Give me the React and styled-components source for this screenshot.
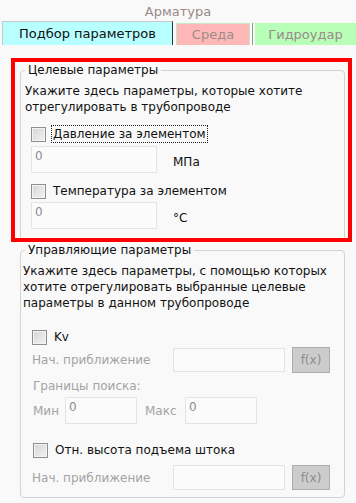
import React from "react";
import styled, { createGlobalStyle } from "styled-components";

const Global = createGlobalStyle`
  body {
    margin: 0;
    background: #f9f9f9;
    font-family: "DejaVu Sans", "Liberation Sans", sans-serif;
    font-size: 12px;
    color: #111;
  }
`;

const Page = styled.div`
  width: 356px;
  height: 503px;
  overflow: hidden;
`;

const Title = styled.div`
  height: 21px;
  padding-top: 3px;
  box-sizing: border-box;
  text-align: center;
  font-size: 13px;
  line-height: 18px;
  color: #9c8a8a;
`;

const TabBar = styled.div`
  display: flex;
  align-items: flex-end;
  height: 24px;
  padding-left: 2px;
`;

const Tab = styled.div`
  height: ${(p) => (p.$active ? "24px" : "22px")};
  box-sizing: border-box;
  display: flex;
  align-items: center;
  justify-content: center;
  font-size: 13px;
  background: ${(p) => p.$bg};
  color: ${(p) => (p.$active ? "#111" : "#9c8a8a")};
  width: ${(p) => p.$w};
  flex: ${(p) => (p.$grow ? 1 : "none")};
  margin-left: ${(p) => p.$ml || "0"};
  border: 1px solid ${(p) => p.$border || "transparent"};
  border-right-color: ${(p) => (p.$active ? "#333" : p.$border || "transparent")};
  border-bottom: none;
`;

const TabSep = styled.div`
  width: 1px;
  height: 22px;
  margin: 0 2px 0 2px;
  background: #9a9a9a;
`;

const Highlight = styled.div`
  margin: 13px 4px 0 11px;
  height: 184px;
  box-sizing: border-box;
  border: 4px solid #ff0000;
  padding: 0 3px 0 5px;
  overflow: hidden;
`;

const Group = styled.fieldset`
  margin: 0 ${(p) => p.$mr || "0"} 0 ${(p) => p.$ml || "0"};
  padding: 0;
  border: 1px solid #d3d3d3;
  border-radius: 4px;
  min-width: 0;
  height: ${(p) => p.$h};
  box-sizing: border-box;
`;

const Legend = styled.legend`
  margin-left: 4px;
  padding: 0 3px 0 3px;
  line-height: 16px;
  font-size: 12px;
  color: #111;
`;

const Body = styled.div`
  display: flex;
  flex-direction: column;
  padding: ${(p) => p.$pad};
`;

const Desc = styled.div`
  line-height: 16px;
  color: #111;
`;

const CheckRow = styled.label`
  display: flex;
  align-items: center;
  gap: 6px;
  height: 18px;
  margin: ${(p) => p.$m};
`;

const Box = styled.span`
  width: 15px;
  height: 15px;
  box-sizing: border-box;
  border: 1px solid #8e8e8e;
  background: linear-gradient(135deg, #d6d6d6, #f2f2f2);
  box-shadow: inset 0 0 0 1px #f4f4f4;
  flex: none;
`;

const CheckText = styled.span`
  padding: 1px 1px;
  line-height: 14px;
  border: 1px ${(p) => (p.$focus ? "dotted #222" : "solid transparent")};
  margin-left: -1px;
`;

const InputRow = styled.div`
  display: flex;
  align-items: center;
  margin: ${(p) => p.$m};
`;

const Field = styled.div`
  width: ${(p) => p.$w};
  height: ${(p) => p.$h};
  box-sizing: border-box;
  border: 1px solid #e4e4e4;
  background: #fbfbfb;
  color: #8c8c96;
  padding: 2px 0 0 3px;
  line-height: 14px;
  flex: none;
`;

const Unit = styled.span`
  margin: 4px 0 0 16px;
  color: #111;
`;

const Muted = styled.span`
  color: #a3a3a3;
  width: ${(p) => p.$w || "auto"};
  margin: ${(p) => p.$m || "0"};
  flex: none;
`;

const FxButton = styled.div`
  width: 38px;
  height: ${(p) => p.$h || "26px"};
  margin-left: 7px;
  box-sizing: border-box;
  border: 1px solid #adadad;
  background: #cccccc;
  color: #8c8c8c;
  display: flex;
  align-items: center;
  justify-content: center;
  font-size: 12px;
`;

const SearchHead = styled.div`
  color: #a3a3a3;
  line-height: 16px;
  margin: 5px 0 0 10px;
`;

export default function App() {
  return (
    <Page>
      <Global />
      <Title>Арматура</Title>
      <TabBar>
        <Tab $active $bg="#b8ffff" $w="171px" $border="#c8c8c8">Подбор параметров</Tab>
        <Tab $bg="#ffb8b8" $w="74px" $ml="3px" $border="#c9e6c4">Среда</Tab>
        <TabSep />
        <Tab $bg="#b8ffb8" $grow>Гидроудар</Tab>
      </TabBar>

      <Highlight>
        <Group $h="190px">
          <Legend>Целевые параметры</Legend>
          <Body $pad="5px 0 0 4px">
            <Desc>
              Укажите здесь параметры, которые хотите
              <br />
              отрегулировать в трубопроводе
            </Desc>
            <CheckRow $m="10px 0 0 6px">
              <Box />
              <CheckText $focus>Давление за элементом</CheckText>
            </CheckRow>
            <InputRow $m="3px 0 0 6px">
              <Field $w="126px" $h="27px">0</Field>
              <Unit>МПа</Unit>
            </InputRow>
            <CheckRow $m="9px 0 0 6px">
              <Box />
              <CheckText>Температура за элементом</CheckText>
            </CheckRow>
            <InputRow $m="2px 0 0 6px">
              <Field $w="126px" $h="27px">0</Field>
              <Unit>°C</Unit>
            </InputRow>
          </Body>
        </Group>
      </Highlight>

      <Group $ml="20px" $mr="11px" $h="256px">
        <Legend>Управляющие параметры</Legend>
        <Body $pad="5px 0 0 2px">
          <Desc>
            Укажите здесь параметры, с помощью которых
            <br />
            хотите отрегулировать выбранные целевые
            <br />
            параметры в данном трубопроводе
          </Desc>
          <CheckRow $m="17px 0 0 9px">
            <Box />
            <CheckText>Kv</CheckText>
          </CheckRow>
          <InputRow $m="1px 0 0 9px">
            <Muted $w="141px">Нач. приближение</Muted>
            <Field $w="112px" $h="24px" />
            <FxButton>f(x)</FxButton>
          </InputRow>
          <SearchHead>Границы поиска:</SearchHead>
          <InputRow $m="3px 0 0 10px">
            <Muted $w="32px">Мин</Muted>
            <Field $w="72px" $h="27px">0</Field>
            <Muted $w="40px" $m="0 0 0 8px">Макс</Muted>
            <Field $w="72px" $h="27px">0</Field>
          </InputRow>
          <CheckRow $m="17px 0 0 10px">
            <Box />
            <CheckText>Отн. высота подъема штока</CheckText>
          </CheckRow>
          <InputRow $m="6px 0 0 9px">
            <Muted $w="141px">Нач. приближение</Muted>
            <Field $w="112px" $h="25px" />
            <FxButton $h="25px">f(x)</FxButton>
          </InputRow>
        </Body>
      </Group>
    </Page>
  );
}
